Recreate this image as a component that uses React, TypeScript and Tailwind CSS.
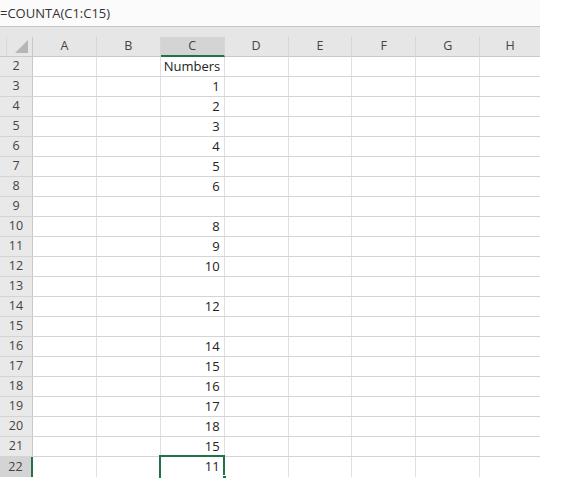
import React from "react";

const columns = ["A", "B", "C", "D", "E", "F", "G", "H"];

// values in column C, keyed by row number
const values: Record<number, string> = {
  2: "Numbers",
  3: "1",
  4: "2",
  5: "3",
  6: "4",
  7: "5",
  8: "6",
  10: "8",
  11: "9",
  12: "10",
  14: "12",
  16: "14",
  17: "15",
  18: "16",
  19: "17",
  20: "18",
  21: "15",
  22: "11",
};

const rows = Array.from({ length: 21 }, (_, i) => i + 2);
const activeRow = 22;

function ColumnHeader({ label }: { label: string }) {
  const active = label === "C";
  const width = label === "H" ? "w-[60px]" : "w-[64px]";
  return (
    <div
      className={`${width} flex h-full items-center justify-center ${
        active
          ? "border-b-2 border-b-[#217346] bg-[#d4d4d4]"
          : "border-b border-b-[#c8c8c8]"
      } ${label === "H" ? "" : "border-r border-r-[#d6d6d6]"}`}
    >
      {label}
    </div>
  );
}

function Row({ n }: { n: number }) {
  const isActive = n === activeRow;
  const last = n === activeRow;
  return (
    <div
      className={`flex h-[20px] ${last ? "" : "border-b border-[#d4d4d4]"}`}
    >
      <div
        className={`flex w-[33px] shrink-0 items-center justify-center text-[12.5px] text-[#444] ${
          isActive
            ? "border-r-2 border-r-[#217346] bg-[#d4d4d4]"
            : "border-r border-r-[#c8c8c8] bg-[#e9e9e9]"
        }`}
      >
        {n}
      </div>
      {columns.map((col) => {
        const text = col === "C" ? values[n] : undefined;
        const isLabel = text !== undefined && isNaN(Number(text));
        const selected = col === "C" && isActive;
        return (
          <div
            key={col}
            className={`relative flex items-center px-[4px] text-[13px] text-[#222] ${
              col === "H" ? "w-[60px]" : "w-[64px] border-r border-r-[#e0e0e0]"
            } ${isLabel ? "justify-start pl-[3px]" : "justify-end"}`}
          >
            {text}
            {selected && (
              <>
                <div className="absolute -left-[2px] -top-[2px] h-[24px] w-[66px] border-2 border-b-0 border-[#217346]" />
                <div className="absolute -right-[3px] top-[18px] h-[5px] w-[5px] border border-white bg-[#217346]" />
              </>
            )}
          </div>
        );
      })}
    </div>
  );
}

export default function App() {
  return (
    <div
      className="h-[481px] w-[570px] overflow-hidden bg-white"
      style={{ fontFamily: '"Open Sans", "Noto Sans", sans-serif' }}
    >
      <div className="flex h-[26px] w-[540px] items-center bg-[#fbfbfb] pt-[2px] text-[13px] text-[#333]">
        =COUNTA(C1:C15)
      </div>
      <div className="h-[452px] w-[540px] overflow-hidden border-t border-[#c4c4c4]">
        <div className="h-[10px] bg-[#e6e6e6]" />
        <div className="flex h-[20px] bg-[#e6e6e6] text-[12.5px] text-[#444]">
          <div className="relative w-[33px] shrink-0 border-b border-r border-[#c8c8c8]">
            <div className="absolute left-[6px] top-0 h-full w-px bg-[#d8d8d8]" />
            <svg
              className="absolute bottom-[3px] right-[4px]"
              width="13"
              height="13"
              viewBox="0 0 13 13"
            >
              <polygon points="13,0 13,13 0,13" fill="#b5b5b5" />
            </svg>
          </div>
          {columns.map((c) => (
            <ColumnHeader key={c} label={c} />
          ))}
        </div>
        {rows.map((n) => (
          <Row key={n} n={n} />
        ))}
      </div>
    </div>
  );
}
